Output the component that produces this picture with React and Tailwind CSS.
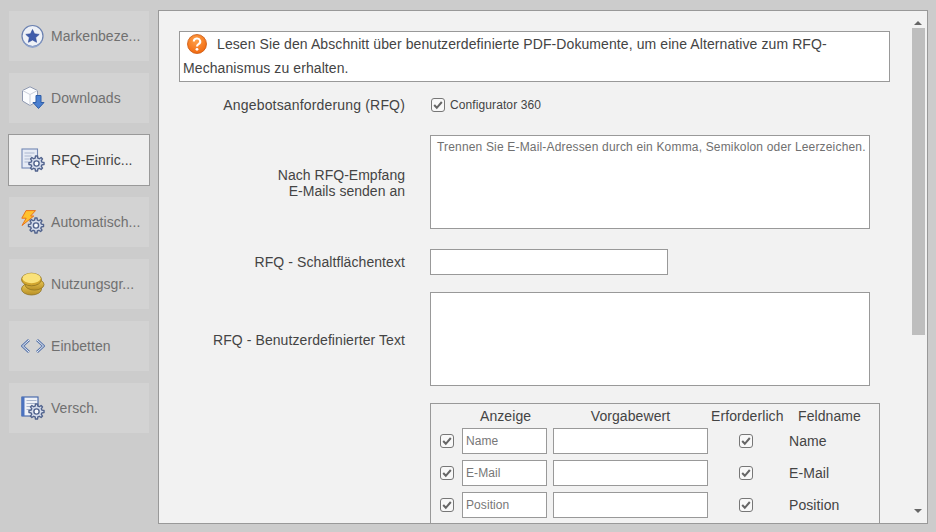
const gearPath = (() => {
  const teeth = 8;
  const pts = [];
  for (let i = 0; i < teeth; i++) {
    const a = (i / teeth) * Math.PI * 2;
    const w = Math.PI / teeth;
    [[5.6, -w * 0.62], [7.6, -w * 0.34], [7.6, w * 0.34], [5.6, w * 0.62]].forEach(([r, d]) => {
      pts.push(`${(r * Math.cos(a + d)).toFixed(2)} ${(r * Math.sin(a + d)).toFixed(2)}`);
    });
  }
  return `M${pts.join("L")}Z`;
})();

const Gear = ({ x = 15, y = 15, s = 1 }) => (
  <g transform={`translate(${x} ${y}) scale(${s})`}>
    <path d={gearPath} fill="#d5dcec" stroke="#51638d" strokeWidth="1.4" strokeLinejoin="round" />
    <circle r="2.6" fill="#f7f9fc" stroke="#51638d" strokeWidth="1.4" />
  </g>
);

const Star = () => (
  <svg width="24" height="24" viewBox="0 0 24 24">
    <circle cx="11.5" cy="12" r="10.5" fill="#eef1f7" stroke="#6a80b0" strokeWidth="1.2" />
    <path d="M1.5 14a10 10 0 0 0 20 0a10 8 0 0 1-20 0z" fill="#8fa3cc" />
    <path d="M11.5 5.5l2 4.3 4.7.6-3.5 3.2.9 4.7-4.1-2.3-4.1 2.3.9-4.7-3.5-3.2 4.7-.6z" fill="#3f5cab" stroke="#2f4a96" strokeWidth=".6" />
  </svg>
);

const Box = () => (
  <svg width="24" height="24" viewBox="0 0 24 24">
    <path d="M1.5 4.5L9 .8l7.5 3.7v10.5L9 19.5l-7.5-4.5z" fill="#fbfcfe" stroke="#8e98b0" strokeWidth="1" strokeLinejoin="round" />
    <path d="M1.5 4.5L9 8.5l7.5-4M9 8.5v11" fill="none" stroke="#c9ced9" strokeWidth="1" />
    <path d="M15 9.5h5v7h3L17.5 22.5 12 16.5h3z" fill="#4a7fd0" stroke="#2f5ea8" strokeWidth="1" strokeLinejoin="round" />
  </svg>
);

const RfqIcon = () => (
  <svg width="24" height="24" viewBox="0 0 24 24">
    <rect x="1" y="1" width="15.5" height="19" fill="#e6ebf5" stroke="#7288b4" strokeWidth="1.1" />
    <path d="M3.5 5h10M3.5 8h7M3.5 11h5M3.5 14h4" stroke="#aab6cf" strokeWidth="1" />
    <Gear x={15.5} y={15.5} s={1} />
  </svg>
);

const Bolt = () => (
  <svg width="24" height="24" viewBox="0 0 24 24">
    <path d="M5 .6h9.5L9.6 6h3.2L1 15.5 5.2 8.2H.8z" fill="#ffc22e" stroke="#e8731a" strokeWidth="1" strokeLinejoin="round" />
    <Gear x={15} y={15.5} s={1} />
  </svg>
);

const Coins = () => (
  <svg width="24" height="24" viewBox="0 0 24 24">
    <defs>
      <linearGradient id="coin" x1="0" y1="0" x2="0" y2="1">
        <stop offset="0%" stopColor="#f0cf5c" />
        <stop offset="100%" stopColor="#b88f25" />
      </linearGradient>
    </defs>
    <ellipse cx="10.5" cy="17" rx="10" ry="6" fill="url(#coin)" stroke="#8f7220" strokeWidth=".8" />
    <ellipse cx="13.5" cy="12.5" rx="9.5" ry="5.6" fill="url(#coin)" stroke="#8f7220" strokeWidth=".8" />
    <ellipse cx="10.5" cy="7.5" rx="10" ry="6.3" fill="#d2a62f" stroke="#8f7220" strokeWidth=".8" />
    <ellipse cx="10.5" cy="6.3" rx="9" ry="5" fill="#fae27a" />
  </svg>
);

const Embed = () => (
  <svg width="24" height="14" viewBox="0 0 24 14">
    <path d="M8 1L1.5 7 8 13" fill="none" stroke="#5a77ad" strokeWidth="2.8" />
    <path d="M8 1L1.5 7 8 13" fill="none" stroke="#eef1f7" strokeWidth="1" />
    <path d="M16 1l6.5 6L16 13" fill="none" stroke="#5a77ad" strokeWidth="2.8" />
    <path d="M16 1l6.5 6L16 13" fill="none" stroke="#eef1f7" strokeWidth="1" />
  </svg>
);

const VersIcon = () => (
  <svg width="24" height="24" viewBox="0 0 24 24">
    <rect x="1" y="1" width="16" height="19" fill="#eef1f7" stroke="#3f62a8" strokeWidth="1.1" />
    <rect x=".5" y="1" width="3" height="19" fill="#4a72c0" />
    <path d="M5.5 4.5h10M5.5 7.5h10M5.5 10.5h7M5.5 13.5h5" stroke="#a9b5cc" strokeWidth="1" />
    <Gear x={15.5} y={15.5} s={1} />
  </svg>
);

const Question = () => (
  <svg width="20" height="20" viewBox="0 0 20 20">
    <defs>
      <radialGradient id="q" cx="45%" cy="30%" r="75%">
        <stop offset="0%" stopColor="#ffa24a" />
        <stop offset="100%" stopColor="#f0650c" />
      </radialGradient>
    </defs>
    <circle cx="10" cy="10" r="9.5" fill="url(#q)" stroke="#c9570f" strokeWidth=".8" />
    <path d="M6.8 7.4a3.2 3 0 1 1 4.7 2.7c-1 .6-1.5 1-1.5 2.3" fill="none" stroke="#fff" strokeWidth="2.1" />
    <circle cx="10" cy="15.3" r="1.4" fill="#fff" />
  </svg>
);

const Check = ({ className = "" }) => (
  <span className={`flex h-[14px] w-[14px] shrink-0 items-center justify-center rounded-[3px] border border-[#777777] bg-[#f8f8f8] ${className}`}>
    <svg width="10" height="10" viewBox="0 0 10 10">
      <path d="M1.2 5l2.6 2.8L8.8 2" fill="none" stroke="#666666" strokeWidth="2" />
    </svg>
  </span>
);

const nav = [
  { label: "Markenbeze...", icon: <Star /> },
  { label: "Downloads", icon: <Box /> },
  { label: "RFQ-Einric...", icon: <RfqIcon />, active: true },
  { label: "Automatisch...", icon: <Bolt /> },
  { label: "Nutzungsgr...", icon: <Coins /> },
  { label: "Einbetten", icon: <Embed /> },
  { label: "Versch.", icon: <VersIcon /> },
];

const rows = ["Name", "E-Mail", "Position"];

const Label = ({ children, className = "tracking-[0.08px]" }) => (
  <div className={`w-[246px] shrink-0 text-right text-[14px] leading-[16px] text-[#444444] ${className}`}>{children}</div>
);

export default function App() {
  return (
    <div className="flex h-[532px] w-[936px] overflow-hidden bg-[#cccccc] pt-[10px] font-['Liberation_Sans',Arial,sans-serif]">
      <nav className="flex w-[158px] shrink-0 flex-col gap-[12px] pl-[9px] pt-[1px]">
        {nav.map((n) => (
          <div
            key={n.label}
            className={
              n.active
                ? "-mx-px -my-px flex h-[52px] w-[142px] items-center border border-[#999999] bg-[#eeeeee] pl-[13px] text-[14px] tracking-[0.05px] text-[#444444]"
                : "flex h-[50px] w-[140px] items-center bg-[#d3d3d3] pl-[13px] text-[14px] tracking-[0.05px] text-[#707070]"
            }
          >
            <span className="-ml-px flex w-[30px] shrink-0 items-center">{n.icon}</span>
            <span className="whitespace-nowrap">{n.label}</span>
          </div>
        ))}
      </nav>

      <main className="flex h-[514px] w-[770px] overflow-hidden border border-[#999999] bg-[#f2f2f2]">
        <div className="w-[752px] shrink-0 overflow-hidden pt-[20px]">
          <div className="ml-[20px] h-[51px] w-[711px] border border-[#999999] bg-white px-[2px] text-[14px] leading-[25px] tracking-[0.09px] text-[#444444]">
            <div className="flex h-[24px] items-center whitespace-nowrap">
              <span className="ml-[5px] mr-[10px] shrink-0"><Question /></span>
              Lesen Sie den Abschnitt über benutzerdefinierte PDF-Dokumente, um eine Alternative zum RFQ-
            </div>
            <div className="ml-px h-[25px]">Mechanismus zu erhalten.</div>
          </div>

          <div className="mt-[15px] flex h-[16px] items-center gap-[25px]">
            <Label className="tracking-[0.17px]">Angebotsanforderung (RFQ)</Label>
            <div className="flex items-center gap-[5px] pl-[1px] text-[12px] tracking-[0.1px] text-[#444444]">
              <Check />
              Configurator 360
            </div>
          </div>

          <div className="mt-[22px] flex items-center gap-[25px]">
            <Label className="pt-[2px] tracking-[0.02px]">Nach RFQ-Empfang<br />E-Mails senden an</Label>
            <textarea
              readOnly
              placeholder="Trennen Sie E-Mail-Adressen durch ein Komma, Semikolon oder Leerzeichen."
              className="block h-[94px] w-[440px] resize-none border border-[#999999] bg-white py-[3px] pl-[6px] pr-0 text-[12px] leading-[16px] tracking-[0.17px] placeholder:text-[#707070]"
            />
          </div>

          <div className="mt-[20px] flex items-center gap-[25px]">
            <Label>RFQ - Schaltflächentext</Label>
            <input readOnly className="block h-[26px] w-[238px] border border-[#999999] bg-white" />
          </div>

          <div className="mt-[17px] flex items-center gap-[25px]">
            <Label className="pt-[2px] tracking-[0.08px]">RFQ - Benutzerdefinierter Text</Label>
            <textarea readOnly className="block h-[94px] w-[440px] resize-none border border-[#999999] bg-white" />
          </div>

          <div className="ml-[271px] mt-[17px] h-[140px] w-[450px] border border-[#999999] text-[14px] tracking-[0.08px] text-[#444444]">
            <div className="flex h-[24px] items-center whitespace-nowrap">
              <span className="ml-[31px] w-[85px] pl-[18px]">Anzeige</span>
              <span className="ml-[6px] w-[155px] text-center">Vorgabewert</span>
              <span className="ml-[3px] w-[74px]">Erforderlich</span>
              <span className="ml-[13px]">Feldname</span>
            </div>
            <div className="flex flex-col gap-[6px]">
              {rows.map((r) => (
                <div key={r} className="flex h-[26px] items-center">
                  <Check className="ml-[9px]" />
                  <input
                    readOnly
                    placeholder={r}
                    className="ml-[8px] block h-[26px] w-[85px] border border-[#999999] bg-white px-[3px] text-[12px] placeholder:text-[#777777]"
                  />
                  <input readOnly className="ml-[6px] block h-[26px] w-[155px] border border-[#999999] bg-white" />
                  <Check className="ml-[31px]" />
                  <span className="ml-[36px]">{r}</span>
                </div>
              ))}
            </div>
          </div>
        </div>

        <div className="flex w-[16px] shrink-0 flex-col items-center pr-[2px]">
          <div className="flex h-[17px] items-end pb-[3px]">
            <div className="h-0 w-0 border-x-[4px] border-b-[4px] border-x-transparent border-b-[#666666]" />
          </div>
          <div className="h-[307px] w-[13px] bg-[#bebebe]" />
          <div className="mt-auto flex h-[14px] items-start">
            <div className="h-0 w-0 border-x-[4px] border-t-[4px] border-x-transparent border-t-[#666666]" />
          </div>
        </div>
      </main>
    </div>
  );
}
